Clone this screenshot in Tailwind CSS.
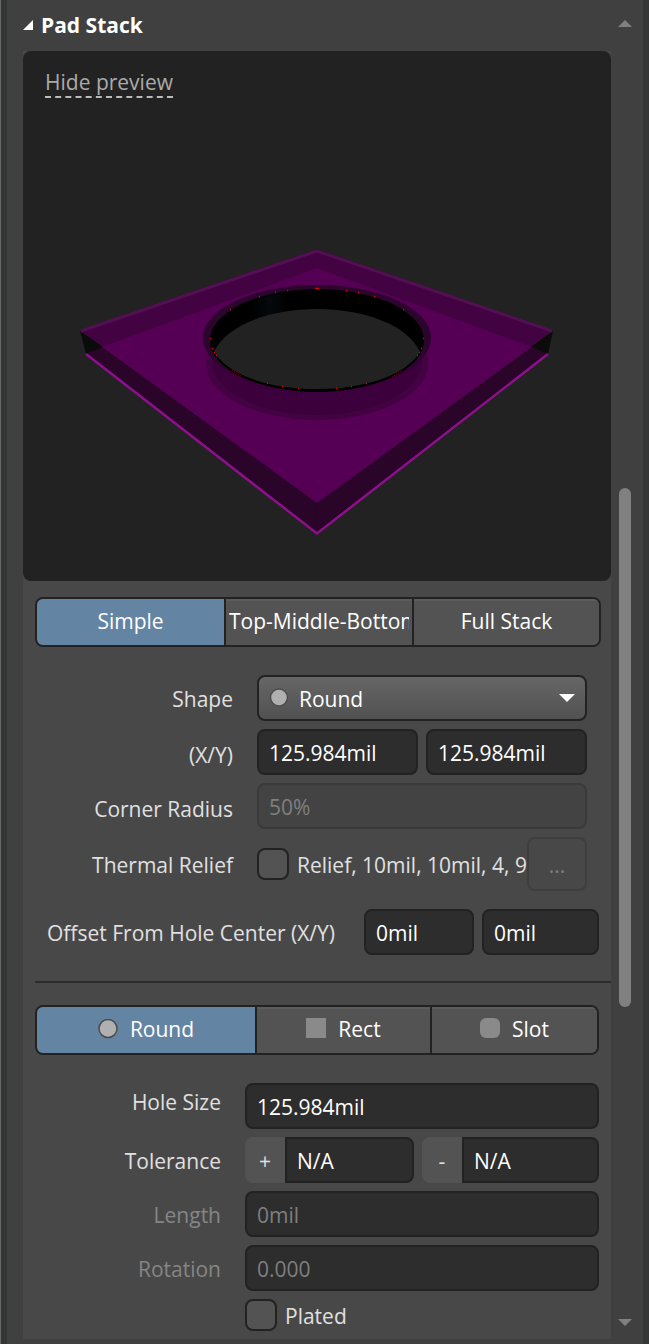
<!DOCTYPE html>
<html lang="en">
<head>
<meta charset="utf-8">
<meta name="viewport" content="width=device-width, initial-scale=1">
<title>Pad Stack</title>
<script src="https://cdn.jsdelivr.net/npm/@tailwindcss/browser@4"></script>
</head>
<body class="bg-[#404040] font-['Open_Sans','Noto_Sans',sans-serif] text-[21px] leading-7 text-[#e0e0e0]">
<div class="flex min-h-screen border-l border-[#666]">
  <div class="w-1.5 shrink-0 bg-[#343535]"></div>

  <main class="min-w-0 flex-1 pl-4">
    <h1 class="flex h-[51px] items-center gap-2 pb-0.5 font-bold text-white">
      <svg class="h-2.5 w-2.5" viewBox="0 0 10 10" aria-hidden="true"><path d="M10 0V10H0Z" fill="#fff"/></svg>
      Pad Stack
    </h1>

    <div class="bg-[#484848]">
      <section class="relative overflow-hidden rounded-lg bg-[#222]" aria-label="Preview">
        <svg class="block w-full" viewBox="23 51 588 530" role="img" aria-label="3D view of the pad">
          <defs>
            <linearGradient id="glint"><stop offset="0" stop-color="#000"/><stop offset=".5" stop-color="#05090c"/><stop offset="1" stop-color="#000"/></linearGradient>
          </defs>
          <!-- slab: side corners, top face, lower face seen through it -->
          <path d="M80 331L86 354L104 347ZM553 331L548 354L530 347Z" fill="#0b0b0b"/>
          <path d="M317 249L553 330L530 348L317 504L104 348L80 330Z" fill="#430343"/>
          <path d="M317 268L532 347L317 504L102 347Z" fill="#550055"/>
          <path d="M102 347L317 503V533L86 354ZM532 347L317 503V533L548 354Z" fill="#2b0529"/>
          <path d="M316.500 503h1v30h-1Z" fill="#2b0529"/>
          <path d="M81 331L317 251L552 331" fill="none" stroke="#521052" stroke-width="3"/>
          <path d="M86 354L317 533.500L548 354" fill="none" stroke="#8c108c" stroke-width="2.500"/>
          <!-- hole: lower rim, upper rim, wall, opening -->
          <ellipse cx="317" cy="364" rx="111" ry="56" fill="#430343"/>
          <ellipse cx="317" cy="361" rx="105" ry="54" fill="#3c003c"/>
          <ellipse cx="317" cy="338" rx="114" ry="53" fill="#2b052b"/>
          <ellipse cx="317" cy="340.500" rx="107" ry="51.500" fill="#000"/>
          <path d="M252 303Q270 294 288 291V312Q266 315 252 321Z" fill="url(#glint)"/>
          <path d="M214 352C226 325 270 309 317 309C364 309 408 325 420 352C405 376 364 389 317 389C270 389 229 376 214 352Z" fill="#222"/>
          <path d="M315 288.500h4M259 296.500h1M275 292.500h1M287 290.500h1M346 290.500h1M358 292.500h1M374 296.500h1M230 309.500h1M403 309.500h1M210 338.500h1M423 338.500h1M212 348.500h1M421 348.500h1M214 352.500h1M419 352.500h1M216 355.500h1M417 355.500h1M282 386.500h1M298 388.500h1M336 388.500h1M351 386.500h1M366 383.500h1M267 383.500h1" stroke="#e00000" stroke-width="1.500"/>
          <path d="M232 370l10 7M392 377l11-7" stroke="#900" stroke-dasharray="1 1.500"/>
        </svg>
        <a href="#" class="absolute top-[18px] left-[22px] border-b-2 border-dashed border-[#bbb] leading-[27px] text-[#aaa]">Hide preview</a>
      </section>

      <div class="pt-4 pb-2 pl-3">
        <div class="mr-2.5 grid h-[50px] grid-cols-[189fr_188fr_185fr] divide-x-2 divide-[#222] overflow-hidden rounded-lg border-2 border-[#222] text-white">
          <button class="min-w-0 overflow-hidden bg-[#6384a3] pb-0.5">Simple</button>
          <button class="min-w-0 overflow-hidden bg-[#535353] px-[3px] pb-0.5 text-left shadow-[inset_0_2px_#5c5c5c]"><span class="block overflow-hidden whitespace-nowrap">Top-Middle-Bottom</span></button>
          <button class="min-w-0 overflow-hidden bg-[#535353] pb-0.5 shadow-[inset_0_2px_#5c5c5c]">Full Stack</button>
        </div>

        <div class="mt-7 mr-6 grid grid-cols-[198px_minmax(0,1fr)] items-center gap-x-6 gap-y-2">
          <label for="shape" class="pt-0.5 text-right">Shape</label>
          <div class="relative">
            <select id="shape" class="h-[46px] w-full appearance-none rounded-lg border-2 border-[#222] bg-linear-to-b from-[#666] to-[#515151] pt-0.5 pl-10 text-white"><option>Round</option><option>Rectangular</option><option>Octagonal</option></select>
            <svg class="pointer-events-none absolute top-3 left-3 h-5 w-5" viewBox="0 0 20 20" aria-hidden="true"><circle cx="10" cy="10.500" r="8.500" fill="#b0b0b0" stroke="#4c4c4c" stroke-width="1.500"/></svg>
            <svg class="pointer-events-none absolute top-[19px] right-3 h-2 w-4" viewBox="0 0 16 8" aria-hidden="true"><path d="M0 0H16L8 8Z" fill="#fff"/></svg>
          </div>

          <label for="size-x" class="pt-1.5 text-right">(X/Y)</label>
          <div class="grid grid-cols-2 gap-2">
            <input id="size-x" value="125.984mil" class="h-[46px] w-full min-w-0 rounded-lg border-2 border-[#222] bg-[#2d2d2d] px-2.5 pt-0.5 text-white">
            <input aria-label="Size Y" value="125.984mil" class="h-[46px] w-full min-w-0 rounded-lg border-2 border-[#222] bg-[#2d2d2d] px-2.5 pt-0.5 text-white">
          </div>

          <label for="radius" class="pt-1.5 text-right">Corner Radius</label>
          <input id="radius" disabled value="50%" class="h-[46px] w-full min-w-0 rounded-lg border-2 border-[#3a3a3a] bg-[#434343] px-2.5 pt-0.5 text-[#7f7f7f]">

          <span class="pt-0.5 text-right">Thermal Relief</span>
          <div class="flex items-center">
            <input id="relief" type="checkbox" class="h-8 w-8 shrink-0 appearance-none rounded-lg border-2 border-[#222] bg-[#535353]">
            <label for="relief" class="ml-2 min-w-0 flex-1 overflow-hidden pt-0.5 whitespace-nowrap">Relief, 10mil, 10mil, 4, 90</label>
            <button disabled class="h-[54px] w-[60px] shrink-0 rounded-lg border-2 border-[#3e3e3e] bg-[#484848] pt-0.5 text-[#7f7f7f]">...</button>
          </div>
        </div>

        <div class="mt-[18px] mr-3 flex items-center gap-2">
          <label for="offset-x" class="flex-1 pt-0.5 pl-3 whitespace-nowrap">Offset From Hole Center (X/Y)</label>
          <input id="offset-x" value="0mil" class="h-[46px] w-[110px] min-w-0 rounded-lg border-2 border-[#222] bg-[#2d2d2d] px-2.5 pt-0.5 text-white">
          <input aria-label="Offset Y" value="0mil" class="h-[46px] w-[117px] min-w-0 rounded-lg border-2 border-[#222] bg-[#2d2d2d] px-2.5 pt-0.5 text-white">
        </div>

        <hr class="mt-[26px] border-t-2 border-[#2c2c2c]">

        <div class="mt-[22px] mr-3 grid h-[50px] grid-cols-[220fr_175fr_165fr] divide-x-2 divide-[#222] overflow-hidden rounded-lg border-2 border-[#222] text-white">
          <button class="flex items-center justify-center gap-3 bg-[#6384a3] pb-0.5"><svg class="h-5 w-5" viewBox="0 0 20 20" aria-hidden="true"><circle cx="10" cy="9" r="9" fill="#b0b0b0" stroke="#4c4c4c" stroke-width="1.500" transform="translate(0 .5)"/></svg>Round</button>
          <button class="flex items-center justify-center gap-3 bg-[#535353] pb-0.5 shadow-[inset_0_2px_#5c5c5c]"><svg class="mb-0.5 h-5 w-5" viewBox="0 0 20 20" aria-hidden="true"><rect width="20" height="20" fill="#8a8a8a"/></svg>Rect</button>
          <button class="flex items-center justify-center gap-3 bg-[#535353] pb-0.5 shadow-[inset_0_2px_#5c5c5c]"><svg class="mb-0.5 h-5 w-5" viewBox="0 0 20 20" aria-hidden="true"><rect width="20" height="20" rx="6" fill="#8a8a8a"/></svg>Slot</button>
        </div>

        <div class="mt-7 mr-3 grid grid-cols-[186px_minmax(0,1fr)] items-center gap-x-6 gap-y-2">
          <label for="hole" class="pb-2 text-right">Hole Size</label>
          <input id="hole" value="125.984mil" class="h-[46px] w-full min-w-0 rounded-lg border-2 border-[#222] bg-[#2d2d2d] px-2.5 pt-0.5 text-white">

          <label for="tol-plus" class="pt-0.5 text-right">Tolerance</label>
          <div class="grid grid-cols-[169fr_177fr] gap-2">
            <div class="flex">
              <span class="flex w-10 shrink-0 items-center justify-center rounded-l-lg bg-[#535353] pt-0.5">+</span>
              <input id="tol-plus" value="N/A" class="h-[46px] w-full min-w-0 rounded-r-lg border-2 border-[#222] bg-[#2d2d2d] px-2.5 pt-0.5 text-white">
            </div>
            <div class="flex">
              <span class="flex w-10 shrink-0 items-center justify-center rounded-l-lg bg-[#535353] pt-0.5">-</span>
              <input aria-label="Tolerance minus" value="N/A" class="h-[46px] w-full min-w-0 rounded-r-lg border-2 border-[#222] bg-[#2d2d2d] px-2.5 pt-0.5 text-white">
            </div>
          </div>

          <label for="length" class="pt-0.5 text-right text-[#858585]">Length</label>
          <input id="length" disabled value="0mil" class="h-[46px] w-full min-w-0 rounded-lg border-2 border-[#222] bg-[#2d2d2d] px-2.5 pt-0.5 text-[#7f7f7f]">

          <label for="rotation" class="pt-0.5 text-right text-[#858585]">Rotation</label>
          <input id="rotation" disabled value="0.000" class="h-[46px] w-full min-w-0 rounded-lg border-2 border-[#222] bg-[#2d2d2d] px-2.5 pt-0.5 text-[#7f7f7f]">

          <div class="col-start-2 flex items-center gap-2">
            <input id="plated" type="checkbox" class="h-8 w-8 shrink-0 appearance-none rounded-lg border-2 border-[#222] bg-[#535353]">
            <label for="plated" class="pt-0.5">Plated</label>
          </div>
        </div>
      </div>
    </div>
  </main>

  <div class="flex w-8 shrink-0 flex-col items-center pt-5 pb-[18px] pr-1" aria-hidden="true">
    <svg class="h-[7px] w-3.5" viewBox="0 0 14 7"><path d="M0 7H14L7 0Z" fill="#808080"/></svg>
    <div class="flex w-3 flex-1 flex-col">
      <div class="flex-[461]"></div>
      <div class="flex-[519] rounded-full bg-[#808080]"></div>
      <div class="flex-[312]"></div>
    </div>
    <svg class="h-[7px] w-3.5" viewBox="0 0 14 7"><path d="M0 0H14L7 7Z" fill="#808080"/></svg>
  </div>
  <div class="w-1.5 shrink-0 bg-[#343535]"></div>
</div>
</body>
</html>
